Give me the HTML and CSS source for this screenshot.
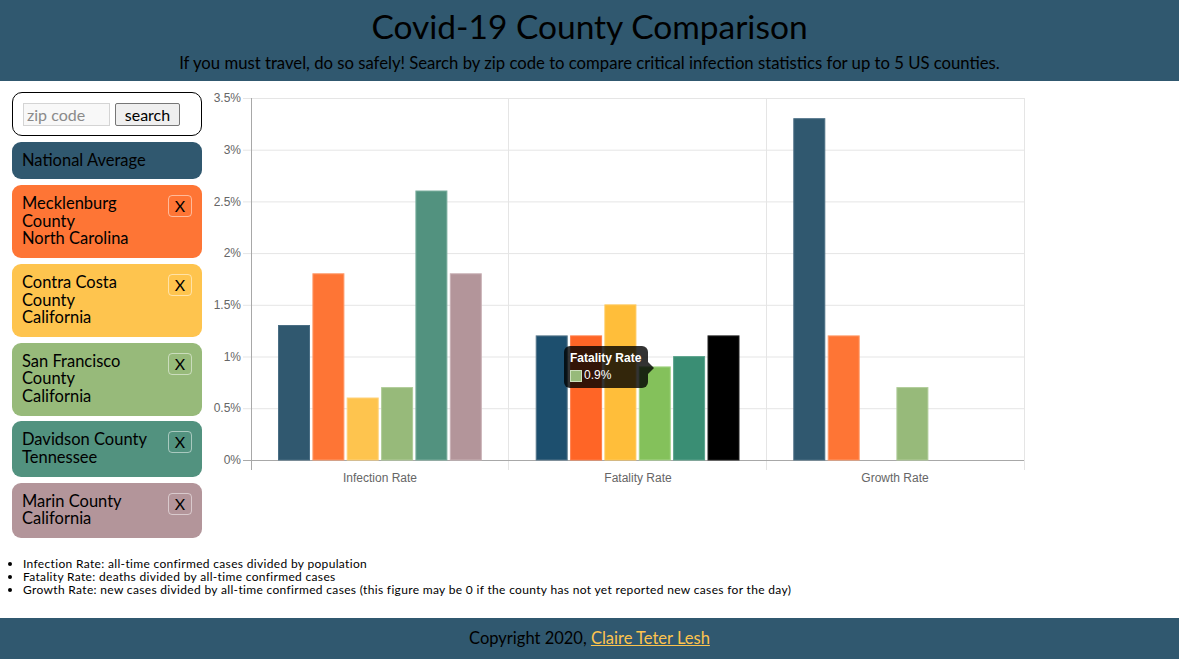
FILE: index.html
```html
<!DOCTYPE html>
<html>
<head>
<meta charset="utf-8">
<link rel="stylesheet" href="styles.css">
</head>
<body>
<header class="top">
  <h1 class="title">Covid-19 County Comparison</h1>
  <p class="subtitle">If you must travel, do so safely! Search by zip code to compare critical infection statistics for up to 5 US counties.</p>
</header>
<main class="main">
  <aside class="sidebar">
    <form class="search">
      <input class="zip" type="text" placeholder="zip code">
      <button class="search-btn" type="button">search</button>
    </form>
    <div class="card national"><span class="name">National Average</span></div>
    <div class="card meck"><span class="name"><span class="county">Mecklenburg County</span><span class="state">North Carolina</span></span><span class="x">X</span></div>
    <div class="card contra"><span class="name"><span class="county">Contra Costa County</span><span class="state">California</span></span><span class="x">X</span></div>
    <div class="card sf"><span class="name"><span class="county">San Francisco County</span><span class="state">California</span></span><span class="x">X</span></div>
    <div class="card davidson"><span class="name"><span class="county">Davidson County</span><span class="state">Tennessee</span></span><span class="x">X</span></div>
    <div class="card marin"><span class="name"><span class="county">Marin County</span><span class="state">California</span></span><span class="x">X</span></div>
  </aside>
  <section class="chart">
    <svg class="chart-svg" width="830" height="400" viewBox="0 0 830 400">
      <g class="grid">
        <line x1="41" y1="10.5" x2="822" y2="10.5"/>
        <line x1="41" y1="62.2" x2="822" y2="62.2"/>
        <line x1="41" y1="113.9" x2="822" y2="113.9"/>
        <line x1="41" y1="165.6" x2="822" y2="165.6"/>
        <line x1="41" y1="217.3" x2="822" y2="217.3"/>
        <line x1="41" y1="269" x2="822" y2="269"/>
        <line x1="41" y1="320.7" x2="822" y2="320.7"/>
        <line x1="306.5" y1="10" x2="306.5" y2="382"/>
        <line x1="564.5" y1="10" x2="564.5" y2="382"/>
        <line x1="822.5" y1="10" x2="822.5" y2="382"/>
      </g>
      <g class="axis">
        <line x1="41" y1="372.5" x2="822" y2="372.5"/>
        <line x1="49.5" y1="10" x2="49.5" y2="382"/>
      </g>
      <g class="ylabels">
        <text x="39" y="14">3.5%</text>
        <text x="39" y="66">3%</text>
        <text x="39" y="118">2.5%</text>
        <text x="39" y="169">2%</text>
        <text x="39" y="221">1.5%</text>
        <text x="39" y="273">1%</text>
        <text x="39" y="324">0.5%</text>
        <text x="39" y="376">0%</text>
      </g>
      <g class="xlabels">
        <text x="178" y="394">Infection Rate</text>
        <text x="436" y="394">Fatality Rate</text>
        <text x="693" y="394">Growth Rate</text>
      </g>
      <g class="bars">
        <rect class="c-nat" x="76.5" y="237.5" width="31" height="134.5"/>
        <rect class="c-meck" x="110.9" y="185.8" width="31" height="186.2"/>
        <rect class="c-contra" x="145.2" y="310" width="31" height="62"/>
        <rect class="c-sf" x="179.6" y="299.6" width="31" height="72.4"/>
        <rect class="c-dav" x="213.9" y="103" width="31" height="269"/>
        <rect class="c-marin" x="248.3" y="185.8" width="31" height="186.2"/>

        <rect class="h-nat" x="334.2" y="247.9" width="31" height="124.1"/>
        <rect class="h-meck" x="368.6" y="247.9" width="31" height="124.1"/>
        <rect class="h-contra" x="402.9" y="216.9" width="31" height="155.1"/>
        <rect class="h-sf" x="437.3" y="278.9" width="31" height="93.1"/>
        <rect class="h-dav" x="471.6" y="268.6" width="31" height="103.4"/>
        <rect class="h-marin" x="506" y="247.9" width="31" height="124.1"/>

        <rect class="c-nat" x="591.8" y="30.7" width="31" height="341.3"/>
        <rect class="c-meck" x="626.2" y="247.9" width="31" height="124.1"/>
        <rect class="c-sf" x="694.9" y="299.6" width="31" height="72.4"/>
      </g>
    </svg>
    <div class="tooltip">
      <div class="tip-title">Fatality Rate</div>
      <div class="tip-row"><span class="swatch"></span>0.9%</div>
    </div>
  </section>
</main>
<ul class="notes">
  <li>Infection Rate: all-time confirmed cases divided by population</li>
  <li>Fatality Rate: deaths divided by all-time confirmed cases</li>
  <li>Growth Rate: new cases divided by all-time confirmed cases (this figure may be 0 if the county has not yet reported new cases for the day)</li>
</ul>
<footer class="foot">Copyright 2020, <a class="link" href="#">Claire Teter Lesh</a></footer>
</body>
</html>
```

FILE: styles.css
```css
html, body {
  margin: 0;
  padding: 0;
}
body {
  font-family: "Lato", "Open Sans", sans-serif;
  color: #000;
  background: #fff;
}
.top {
  background: #30586f;
  height: 81px;
  text-align: center;
  overflow: hidden;
}
.title {
  margin: 0;
  padding-top: 6px;
  font-size: 33.5px;
  font-weight: 400;
  line-height: 40px;
}
.subtitle {
  margin: 7px 0 0;
  font-size: 16.7px;
  line-height: 20px;
}
.main {
  display: flex;
  padding-top: 7px;
  height: 460px;
}
.sidebar {
  margin-left: 12px;
  margin-top: 4px;
  width: 190px;
  display: flex;
  flex-direction: column;
  gap: 5.7px;
}
.search {
  margin: 0;
  height: 44px;
  box-sizing: border-box;
  border: 1px solid #000;
  border-radius: 10px;
  display: flex;
  align-items: center;
  padding-left: 10px;
  gap: 5px;
}
.zip {
  width: 87px;
  height: 23px;
  box-sizing: border-box;
  border: 1px solid #d4d4d4;
  background: #f8f8f8;
  font-family: inherit;
  font-size: 16px;
  padding: 0 3px;
  margin: 0;
}
.zip::placeholder {
  color: #8a8a8a;
}
.search-btn {
  width: 65px;
  height: 23px;
  box-sizing: border-box;
  border: 1px solid #767676;
  border-radius: 2px;
  background: #efefef;
  font-family: inherit;
  font-size: 16px;
  padding: 0;
  margin: 0;
  color: #000;
}
.card {
  border-radius: 9px;
  padding: 10px;
  display: flex;
  align-items: flex-start;
  gap: 11px;
  font-size: 16.5px;
  line-height: 17.7px;
}
.name {
  flex: 1;
}
.county, .state {
  display: block;
}
.x {
  width: 24px;
  height: 22px;
  box-sizing: border-box;
  border: 1px solid rgba(255,255,255,0.5);
  border-radius: 4px;
  text-align: center;
  line-height: 20px;
  font-size: 16px;
}
.national { background: #30586f; }
.meck { background: #fe7535; }
.contra { background: #fec44e; }
.sf { background: #97ba7a; }
.davidson { background: #52927f; }
.marin { background: #b3959a; }
.chart {
  position: relative;
  width: 830px;
  height: 400px;
}
.chart-svg {
  display: block;
  font-family: "Liberation Sans", Arial, sans-serif;
  font-size: 12px;
}
.grid line {
  stroke: #e5e5e5;
  stroke-width: 1;
}
.axis line {
  stroke: #a8a8a8;
  stroke-width: 1;
}
.ylabels text {
  fill: #666;
  text-anchor: end;
}
.xlabels text {
  fill: #666;
  text-anchor: middle;
}
.bars rect {
  stroke-width: 1;
}
.c-nat { fill: #30586f; stroke: #4a6e84; }
.c-meck { fill: #fe7535; stroke: #ff9a6a; }
.c-contra { fill: #fec44e; stroke: #ffd27a; }
.c-sf { fill: #97ba7a; stroke: #b0cc98; }
.c-dav { fill: #52927f; stroke: #7aae9e; }
.c-marin { fill: #b3959a; stroke: #c8b0b4; }
.h-nat { fill: #1d4f6e; stroke: #56778b; }
.h-meck { fill: #ff6526; stroke: #ff7e4a; }
.h-contra { fill: #ffbe3a; stroke: #ffc85a; }
.h-sf { fill: #84c15b; stroke: #a6d489; }
.h-dav { fill: #3a8e74; stroke: #5aa38c; }
.h-marin { fill: #000; stroke: #222; }
.tooltip {
  position: absolute;
  left: 362px;
  top: 258px;
  width: 84px;
  height: 42px;
  box-sizing: border-box;
  background: rgba(0,0,0,0.8);
  border-radius: 6px;
  padding: 5px 6px;
  color: #fff;
  font-family: "Liberation Sans", Arial, sans-serif;
  font-size: 12px;
  line-height: 15px;
}
.tooltip::after {
  content: "";
  position: absolute;
  right: -6px;
  top: 16px;
  border-top: 6px solid transparent;
  border-bottom: 6px solid transparent;
  border-left: 6px solid rgba(0,0,0,0.8);
}
.tip-title {
  font-weight: 700;
}
.tip-row {
  display: flex;
  align-items: center;
  margin-top: 2px;
}
.swatch {
  width: 10px;
  height: 10px;
  background: #97ba7a;
  border: 1px solid #cde0bd;
  margin-right: 2px;
}
.notes {
  margin: 9px 0 0;
  padding-left: 23px;
  font-size: 12px;
  letter-spacing: 0.33px;
  line-height: 13px;
}
.foot {
  margin-top: 22px;
  background: #30586f;
  height: 42px;
  line-height: 40px;
  text-align: center;
  font-size: 16.5px;
}
.link {
  color: #fec44e;
}
```
